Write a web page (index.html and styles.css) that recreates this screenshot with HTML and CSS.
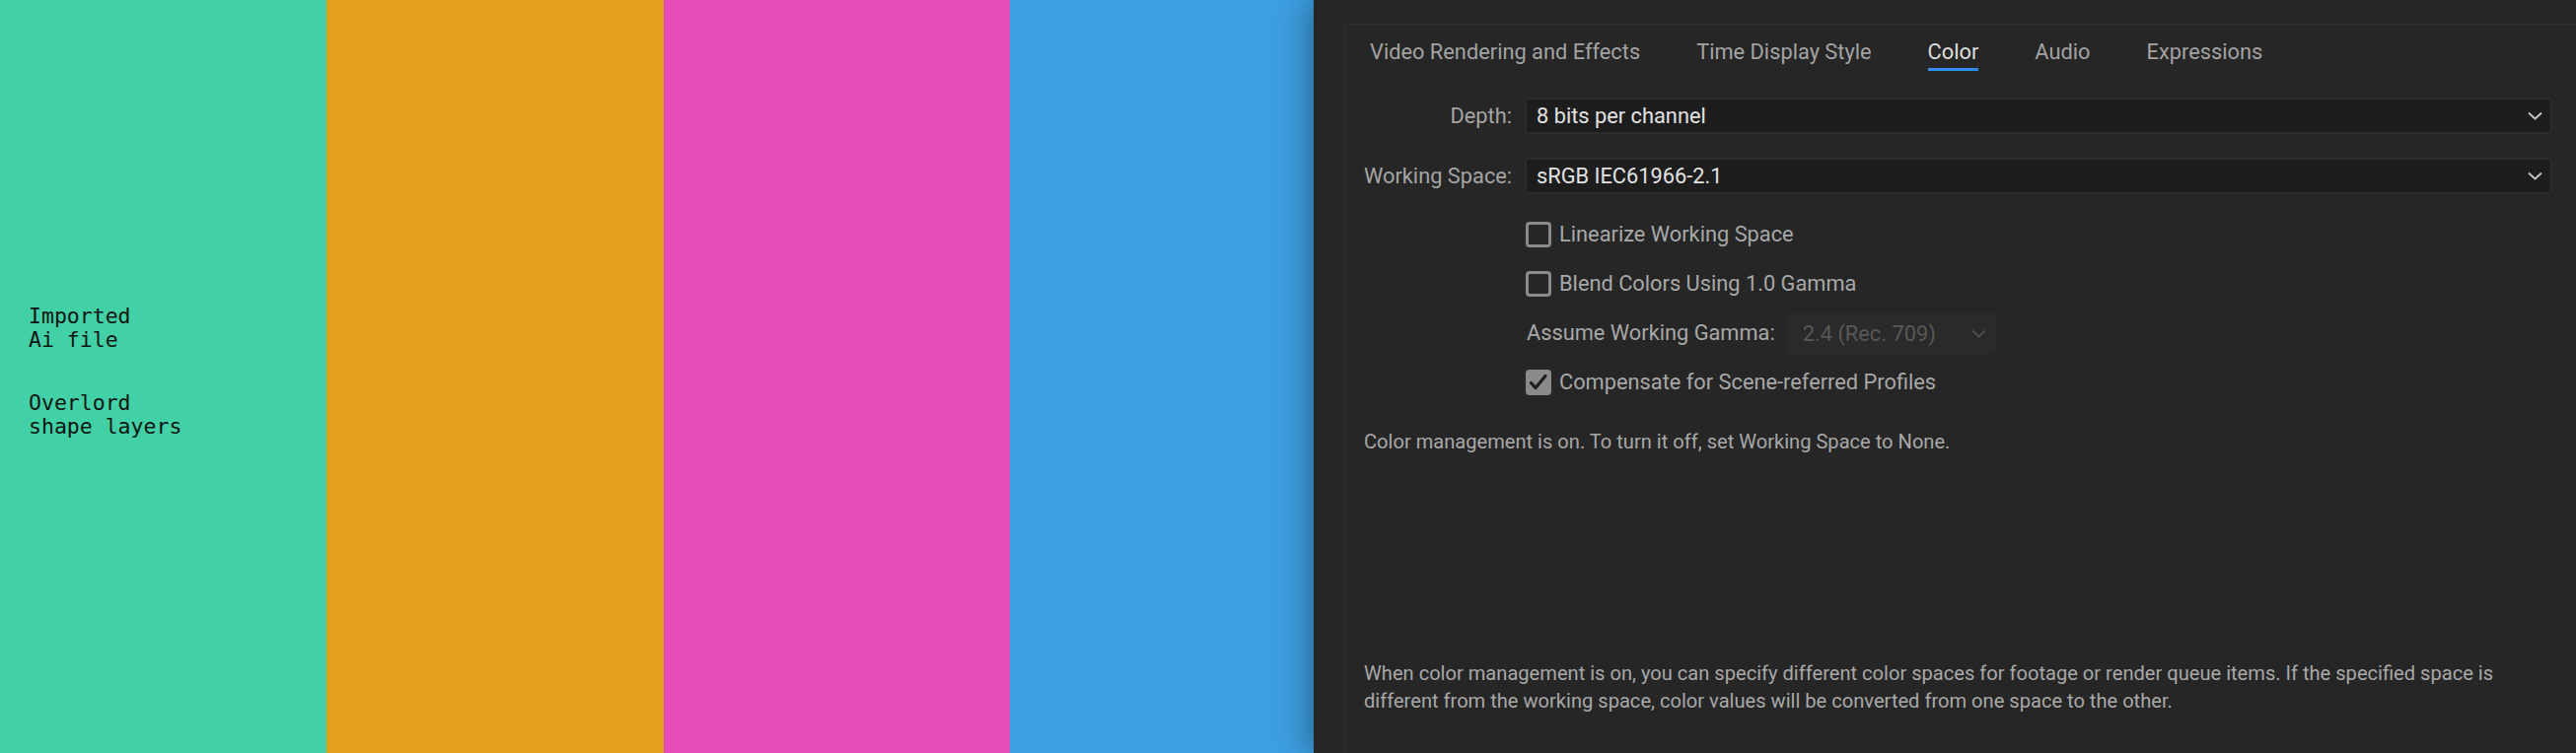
FILE: index.html
```html
<!DOCTYPE html>
<html lang="en">
<head>
<meta charset="utf-8">
<title>Project Settings – Color</title>
<link rel="stylesheet" href="styles.css">
</head>
<body>
<div class="screen">
  <div class="stripe stripe-green">
    <div class="mono-notes">
      <p>Imported<br>Ai file</p>
      <p>Overlord<br>shape layers</p>
    </div>
  </div>
  <div class="stripe stripe-orange"></div>
  <div class="stripe stripe-pink"></div>
  <div class="stripe stripe-blue"></div>

  <section class="panel">
    <div class="prefs">
      <nav class="tabs">
        <span class="tab">Video Rendering and Effects</span>
        <span class="tab">Time Display Style</span>
        <span class="tab tab-active">Color</span>
        <span class="tab">Audio</span>
        <span class="tab">Expressions</span>
      </nav>

      <div class="form">
        <div class="field">
          <span class="field-label">Depth:</span>
          <div class="select">
            <span>8 bits per channel</span>
            <svg class="chevron" width="15" height="9" viewBox="0 0 15 9"><polyline points="1,1.5 7.5,7.5 14,1.5" fill="none" stroke="#c9c9c9" stroke-width="1.8"/></svg>
          </div>
        </div>
        <div class="field">
          <span class="field-label">Working Space:</span>
          <div class="select">
            <span>sRGB IEC61966-2.1</span>
            <svg class="chevron" width="15" height="9" viewBox="0 0 15 9"><polyline points="1,1.5 7.5,7.5 14,1.5" fill="none" stroke="#c9c9c9" stroke-width="1.8"/></svg>
          </div>
        </div>

        <div class="options">
          <div class="option-row">
            <span class="checkbox"></span>
            <span class="option-label">Linearize Working Space</span>
          </div>
          <div class="option-row">
            <span class="checkbox"></span>
            <span class="option-label">Blend Colors Using 1.0 Gamma</span>
          </div>
          <div class="option-row">
            <span class="option-label gamma-label">Assume Working Gamma:</span>
            <div class="select select-disabled">
              <span>2.4 (Rec. 709)</span>
              <svg class="chevron" width="15" height="9" viewBox="0 0 15 9"><polyline points="1,1.5 7.5,7.5 14,1.5" fill="none" stroke="#575757" stroke-width="1.6"/></svg>
            </div>
          </div>
          <div class="option-row">
            <span class="checkbox checkbox-checked">
              <svg width="20" height="20" viewBox="0 0 20 20"><polyline points="2.5,10.5 7,15.5 17,3.5" fill="none" stroke="#1d1d1d" stroke-width="3.2" stroke-linecap="round" stroke-linejoin="round"/></svg>
            </span>
            <span class="option-label">Compensate for Scene-referred Profiles</span>
          </div>
        </div>

        <p class="note">Color management is on. To turn it off, set Working Space to None.</p>
        <p class="note note-bottom">When color management is on, you can specify different color spaces for footage or render queue items. If the specified space is different from the working space, color values will be converted from one space to the other.</p>
      </div>
    </div>
  </section>
</div>
</body>
</html>
```

FILE: styles.css
```css
html, body {
  margin: 0;
  padding: 0;
  background: #262626;
  overflow: hidden;
}

.screen {
  display: flex;
  width: 2612px;
  height: 764px;
}

.stripe {
  flex: none;
  height: 100%;
  box-sizing: border-box;
}

.stripe-green {
  width: 331px;
  background: #42d0a6;
  padding: 309px 0 0 29px;
}

.stripe-orange {
  width: 342px;
  background: #e3a01d;
}

.stripe-pink {
  width: 351px;
  background: #e44cb6;
}

.stripe-blue {
  width: 308px;
  background: #3d9fe2;
}

.mono-notes p {
  margin: 0 0 40px;
  font-family: "DejaVu Sans Mono", "Liberation Mono", monospace;
  font-size: 21.5px;
  line-height: 24px;
  color: #0f1512;
}

.panel {
  flex: 1;
  position: relative;
  background: #262626;
  padding: 24px 0 0 31px;
  box-shadow: -6px 0 30px rgba(0, 0, 0, 0.35);
}

.prefs {
  height: 100%;
  box-sizing: border-box;
  border-top: 1px solid #303030;
  border-left: 1px solid #303030;
  border-top-left-radius: 3px;
  font-family: Roboto, "Open Sans", sans-serif;
}

.tabs {
  display: flex;
  gap: 57px;
  padding: 13px 0 0 25px;
}

.tab {
  font-size: 21.8px;
  line-height: 30px;
  padding-bottom: 1px;
  border-bottom: 3px solid transparent;
  color: #a3a3a3;
  white-space: nowrap;
}

.tab-active {
  color: #dedede;
  border-bottom-color: #2f8def;
}

.form {
  padding: 27px 24px 0 19px;
}

.field {
  display: flex;
  align-items: center;
  gap: 13px;
}

.field + .field {
  margin-top: 24px;
}

.field-label {
  flex: none;
  width: 150px;
  text-align: right;
  white-space: nowrap;
  font-size: 21.8px;
  color: #a5a5a5;
}

.select {
  flex: 1;
  height: 37px;
  box-sizing: border-box;
  display: flex;
  align-items: center;
  justify-content: space-between;
  padding: 0 8px 0 10px;
  background: #1d1d1d;
  border: 2px solid #2c2c2c;
  border-radius: 5px;
  font-size: 21.8px;
  color: #e2e2e2;
  white-space: nowrap;
}

.chevron {
  flex: none;
  display: block;
}

.options {
  margin-top: 16px;
  padding-left: 164px;
}

.option-row {
  height: 50px;
  display: flex;
  align-items: center;
}

.checkbox {
  flex: none;
  width: 26px;
  height: 26px;
  box-sizing: border-box;
  margin-right: 8px;
  border: 3px solid #8a8a8a;
  border-radius: 4px;
  display: flex;
  align-items: center;
  justify-content: center;
}

.checkbox-checked {
  background: #8a8a8a;
}

.option-label {
  font-size: 21.8px;
  line-height: 30px;
  color: #a8a8a8;
  white-space: nowrap;
}

.gamma-label {
  margin-left: 1px;
  margin-right: 12px;
}

.select-disabled {
  flex: none;
  width: 212px;
  height: 41px;
  padding: 0 10px 0 16px;
  background: #2a2a2a;
  border: none;
  border-radius: 4px;
  color: #585858;
}

.note {
  margin: 21px 0 0;
  font-size: 20.1px;
  line-height: 28px;
  color: #a8a8a8;
}

.note-bottom {
  margin-top: 207px;
  max-width: 1180px;
}
```
